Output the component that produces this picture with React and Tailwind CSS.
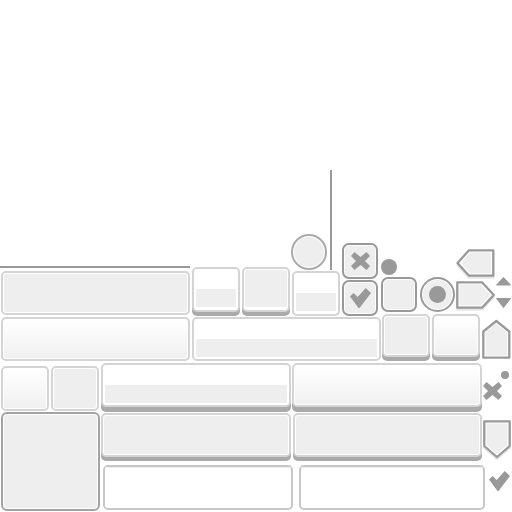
import React from 'react';

const Frame = ({ className = '', children }) => (
  <div className={`box-border shrink-0 border-2 ${className}`}>{children}</div>
);

// light frame with a solid grey panel filling it
const Filled = ({ className = '' }) => (
  <Frame className={`rounded-[5px] border-[#d4d4d4] bg-white p-px ${className}`}>
    <div className="h-full rounded-[2px] bg-[#eeeeee]" />
  </Frame>
);

// white frame fading to grey
const Faded = ({ className = '' }) => (
  <Frame className={`rounded-[5px] border-[#d4d4d4] bg-white p-px ${className}`}>
    <div className="h-full rounded-[2px] bg-gradient-to-b from-white to-[#f0f0f0]" />
  </Frame>
);

// white frame with a grey band low down
const Banded = ({ className = '' }) => (
  <Frame className={`flex flex-col justify-end rounded-[5px] border-[#d4d4d4] bg-white px-[2px] ${className}`}>
    <div className="h-[18px] bg-[#eeeeee]" />
  </Frame>
);

const Plain = ({ className = '' }) => (
  <Frame className={`h-[45px] rounded-[5px] border-[#c8c8c8] bg-white ${className}`}>
    <div className="h-px bg-[#eeeeee]" />
  </Frame>
);

const Outlined = ({ className = '', children }) => (
  <Frame className={`rounded-[7px] border-[#999999] bg-white p-px ${className}`}>
    <div className="flex h-full w-full items-center justify-center rounded-[4px] bg-[#eeeeee]">{children}</div>
  </Frame>
);

const Cross = ({ className = '' }) => (
  <svg className={className} width="19" height="18" viewBox="0 0 19 18" fill="#999999">
    <polygon points="3.5,0 9.5,5 15.5,0 19,4 14,9 19,14 15.5,18 9.5,13 3.5,18 0,14 5,9 0,4" />
  </svg>
);

const Check = ({ className = '' }) => (
  <svg className={className} width="21" height="20" viewBox="0 0 21 20" fill="#999999">
    <polygon points="0,8.5 3.5,5 7.7,9 15.7,0 21,5 9.5,20 8.5,20" />
  </svg>
);

const Pointer = ({ className = '', width, height, outer, inner, shade = true }) => (
  <svg className={`shrink-0 ${className}`} width={width} height={height} viewBox={`0 0 ${width} ${height}`}>
    {shade && <polygon points={outer} transform="translate(0 2)" fill="#e6e6e6" stroke="#e6e6e6" strokeWidth="2.3" strokeLinejoin="round" />}
    <polygon points={outer} fill="#ffffff" stroke="#999999" strokeWidth="2.3" strokeLinejoin="round" />
    <polygon points={inner} fill="#eeeeee" />
  </svg>
);

export default function App() {
  return (
    <div className="flex h-[512px] w-[512px] flex-col overflow-hidden bg-white pt-[170px]">
      {/* upper band */}
      <div className="flex h-[193px] shrink-0">
        <div className="flex w-[190px] shrink-0 flex-col items-end justify-end pb-[2px]">
          <div className="mb-[3px] h-[2px] w-[190px] bg-[#999999]" />
          <Filled className="mb-[2px] h-[44px] w-[189px]" />
          <Faded className="h-[44px] w-[189px]" />
        </div>

        <div className="ml-[2px] flex w-[189px] shrink-0 flex-col justify-end pb-[2px]">
          <div className="flex items-end">
            <Banded className="mb-[4px] h-[45px] w-[48px] pb-[3px] shadow-[0_4px_0_#aaaaaa]" />
            <Filled className="mb-[4px] ml-[2px] h-[45px] w-[48px] pb-[3px] shadow-[0_4px_0_#aaaaaa]" />
            <div className="ml-[2px] flex w-[48px] shrink-0 flex-col">
              <div className="-ml-px flex items-end">
                <Frame className="h-[36px] w-[36px] rounded-full border-[#aaaaaa] bg-white p-px">
                  <div className="h-full rounded-full bg-[#eeeeee]" />
                </Frame>
                <div className="ml-[3px] h-[100px] w-[2px] bg-[#999999]" />
              </div>
              <Banded className="mt-px h-[45px] w-[48px] pb-[3px]" />
            </div>
            <div className="ml-[2px] flex flex-col gap-px">
              <Outlined className="h-[36px] w-[36px]"><Cross /></Outlined>
              <Outlined className="h-[36px] w-[36px]"><Check /></Outlined>
            </div>
          </div>
          <Banded className="mt-px h-[44px] w-[189px] pb-[2px]" />
        </div>

        <div className="flex w-[131px] shrink-0 flex-col justify-end pb-[2px]">
          <div className="flex items-end">
            <div className="flex flex-col">
              <div className="h-[16px] w-[16px] rounded-full bg-[#999999]" />
              <Outlined className="mt-[2px] h-[35px] w-[36px]" />
            </div>
            <Frame className="ml-[3px] h-[35px] w-[35px] rounded-full border-[#999999] bg-white p-px">
              <div className="flex h-full items-center justify-center rounded-full bg-[#eeeeee]">
                <div className="h-[17px] w-[17px] rounded-full bg-[#999999]" />
              </div>
            </Frame>
            <div className="ml-px flex flex-col">
              <Pointer width={40} height={32}
                outer="1.5,15 13,2.3 37.3,2.3 37.3,27.7 13,27.7" inner="5,15 14,4.5 35,4.5 35,25.5 14,25.5" />
              <Pointer width={40} height={32}
                outer="1.3,2.3 26,2.3 37.8,15 26,27.7 1.3,27.7" inner="3.5,4.5 25,4.5 34.5,15 25,25.5 3.5,25.5" />
            </div>
            <svg className="-ml-px mb-[2px] shrink-0" width="17" height="34" viewBox="0 0 17 34" fill="#999999" stroke="#999999" strokeWidth="1" strokeLinejoin="round">
              <polygon points="8.5,1.5 15.5,9 1.5,9" />
              <polygon points="1.5,22.5 15.5,22.5 8.5,31.5" />
            </svg>
          </div>
          <div className="ml-px mt-[2px] flex items-start gap-[2px]">
            <Filled className="mb-[4px] h-[43px] w-[48px] shadow-[0_4px_0_#aaaaaa]" />
            <Faded className="mb-[4px] h-[43px] w-[48px] shadow-[0_4px_0_#aaaaaa]" />
            <Pointer className="mt-[5px]" width={29} height={41} shade={false}
              outer="14.3,2 27.3,12.5 27.3,38.7 1.3,38.7 1.3,12.5" inner="14.3,4.5 25,13.5 25,36.5 3.5,36.5 3.5,13.5" />
          </div>
        </div>
      </div>

      {/* lower band */}
      <div className="flex h-[149px] shrink-0">
        <div className="flex w-[101px] shrink-0 flex-col pl-px">
          <div className="mt-[3px] flex gap-[2px]">
            <Faded className="h-[45px] w-[48px]" />
            <Filled className="h-[45px] w-[48px]" />
          </div>
          <Frame className="mt-px h-[99px] w-[99px] rounded-[6px] border-[#a3a3a3] bg-white p-px">
            <div className="h-full rounded-[3px] bg-[#eeeeee]" />
          </Frame>
        </div>

        <div className="flex w-[381px] shrink-0 flex-col">
          <div className="flex gap-px">
            <Banded className="h-[44px] w-[190px] pb-[2px] shadow-[0_5px_0_#aaaaaa]" />
            <Faded className="h-[44px] w-[190px] shadow-[0_5px_0_#aaaaaa]" />
          </div>
          <div className="mt-[6px] flex gap-[2px]">
            <Filled className="h-[44px] w-[190px] shadow-[0_4px_0_#aaaaaa]" />
            <Filled className="h-[44px] w-[189px] p-[2px] shadow-[0_4px_0_#aaaaaa]" />
          </div>
          <div className="mt-[8px] flex gap-[6px] pl-[2px]">
            <Plain className="w-[190px]" />
            <Plain className="w-[186px]" />
          </div>
        </div>

        <div className="flex w-[30px] shrink-0 flex-col">
          <div className="mr-[3px] mt-[8px] h-[8px] w-[8px] self-end rounded-full bg-[#999999]" />
          <Cross className="ml-px mt-[3px]" />
          <Pointer className="ml-px mt-[19px]" width={28} height={43}
            outer="1.3,2.3 26.7,2.3 26.7,27 14,38 1.3,27" inner="3.5,4.5 24.5,4.5 24.5,26 14,35 3.5,26" />
          <Check className="ml-[7px] mt-[9px]" />
        </div>
      </div>
    </div>
  );
}
